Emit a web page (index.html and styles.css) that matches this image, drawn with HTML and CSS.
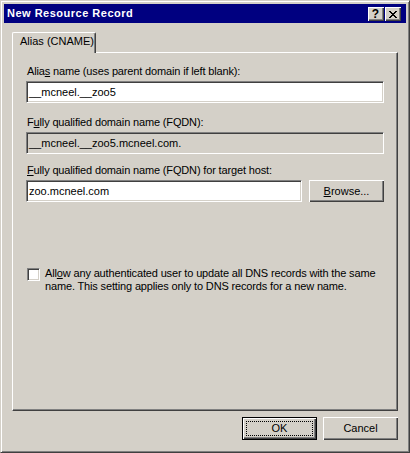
FILE: index.html
```html
<!DOCTYPE html>
<html>
<head>
<meta charset="utf-8">
<link rel="stylesheet" href="styles.css">
</head>
<body>
<div class="window">
  <div class="titlebar">
    <span class="title">New Resource Record</span>
    <div class="caption-btns">
      <span class="cbtn help">?</span>
      <span class="cbtn close"><svg width="8" height="7" viewBox="0 0 8 7" shape-rendering="crispEdges"><path d="M0 0h2v1h-2zM6 0h2v1h-2zM1 1h2v1h-2zM5 1h2v1h-2zM2 2h4v1h-4zM3 3h2v1h-2zM2 4h4v1h-4zM1 5h2v1h-2zM5 5h2v1h-2zM0 6h2v1h-2zM6 6h2v1h-2z" fill="#000"/></svg></span>
    </div>
  </div>
  <div class="body">
    <div class="tabs"><div class="tab">Alias (CNAME)</div></div>
    <div class="panel">
      <div class="field f1">
        <div class="lbl">Alia<u>s</u> name (uses parent domain if left blank):</div>
        <div class="edit">__mcneel.__zoo5</div>
      </div>
      <div class="field f2">
        <div class="lbl">F<u>u</u>lly qualified domain name (FQDN):</div>
        <div class="edit readonly">__mcneel.__zoo5.mcneel.com.</div>
      </div>
      <div class="field f3">
        <div class="lbl"><u>F</u>ully qualified domain name (FQDN) for target host:</div>
        <div class="row">
          <div class="edit">zoo.mcneel.com</div>
          <div class="btn browse"><u>B</u>rowse...</div>
        </div>
      </div>
      <div class="check">
        <span class="box"></span>
        <div class="check-text">All<u>o</u>w any authenticated user to update all DNS records with the same<br>name. This setting applies only to DNS records for a new name.</div>
      </div>
    </div>
    <div class="buttons">
      <div class="btn default"><span class="focus">OK</span></div>
      <div class="btn">Cancel</div>
    </div>
  </div>
</div>
</body>
</html>
```
FILE: styles.css
```css
* { box-sizing: border-box; }
body {
  margin: 0;
  background: #d4d0c8;
  font-family: "Liberation Sans", Arial, sans-serif;
  font-size: 11px;
  line-height: 13px;
  color: #000;
}
u { text-decoration: underline; text-underline-offset: 1px; }
.window {
  width: 410px;
  height: 453px;
  border: 1px solid;
  border-color: #d4d0c8 #404040 #404040 #d4d0c8;
  box-shadow: inset 1px 1px #fff, inset -1px -1px #808080;
  padding: 3px;
  display: flex;
  flex-direction: column;
  background: #d4d0c8;
}
.titlebar {
  height: 19px;
  background: #000080;
  color: #fff;
  display: flex;
  justify-content: space-between;
  align-items: flex-start;
  padding: 0 5px 0 3px;
}
.title {
  font-weight: bold;
  line-height: 19px;
  letter-spacing: 0.5px;
}
.caption-btns {
  display: flex;
  gap: 1px;
  padding-top: 3px;
}
.cbtn {
  width: 16px;
  height: 14px;
  background: #d4d0c8;
  box-shadow: inset 1px 1px #fff, inset -1px -1px #404040, inset -2px -2px #808080;
  display: flex;
  align-items: center;
  justify-content: center;
  color: #000;
}
.help {
  font-weight: bold;
  font-size: 12px;
  line-height: 12px;
  padding-right: 1px;
}
.close svg { display: block; margin-left: -1px; }
.body {
  flex: 1;
  display: flex;
  flex-direction: column;
  padding: 9px 8px 0 8px;
}
.tabs {
  height: 20px;
  display: flex;
}
.tab {
  position: relative;
  z-index: 1;
  width: 84px;
  height: 21px;
  background: #d4d0c8;
  border-top: 1px solid #fff;
  border-left: 1px solid #fff;
  border-right: 1px solid #404040;
  box-shadow: inset -1px 0 #808080;
  border-radius: 2px 2px 0 0;
  padding: 2px 0 0 7px;
}
.panel {
  height: 359px;
  border: 1px solid;
  border-color: #fff #404040 #404040 #fff;
  box-shadow: inset -1px -1px #808080;
  padding: 12px 13px 0 13px;
  display: flex;
  flex-direction: column;
}
.lbl { margin-bottom: 3px; padding-left: 1px; letter-spacing: -0.15px; }
.f2 { margin-top: 13px; }
.f3 { margin-top: 10px; }
.edit {
  height: 22px;
  background: #fff;
  border: 1px solid;
  border-color: #808080 #fff #fff #808080;
  box-shadow: inset 1px 1px #404040, inset -1px -1px #d4d0c8;
  padding: 0 0 0 2px;
  display: flex;
  align-items: center;
  white-space: nowrap;
}
.edit.readonly { background: #d4d0c8; }
.row { display: flex; gap: 7px; }
.row .edit { flex: 1; }
.btn {
  width: 75px;
  height: 23px;
  background: #d4d0c8;
  box-shadow: inset 1px 1px #fff, inset -1px -1px #404040, inset -2px -2px #808080;
  display: flex;
  align-items: center;
  justify-content: center;
}
.browse { height: 22px; }
.check {
  margin-top: 65px;
  display: flex;
  align-items: flex-start;
  gap: 5px;
}
.box {
  flex: none;
  width: 13px;
  height: 13px;
  margin: 1px 0 0 1px;
  background: #fff;
  border: 1px solid;
  border-color: #808080 #fff #fff #808080;
  box-shadow: inset 1px 1px #404040, inset -1px -1px #d4d0c8;
}
.check-text {
  white-space: nowrap;
  letter-spacing: -0.15px;
}
.buttons {
  margin-top: 6px;
  display: flex;
  justify-content: flex-end;
  gap: 6px;
}
.btn.default {
  border: 1px solid #000;
  padding: 3px;
}
.focus {
  flex: 1;
  align-self: stretch;
  border: 1px dotted #000;
  display: flex;
  align-items: center;
  justify-content: center;
}
```
